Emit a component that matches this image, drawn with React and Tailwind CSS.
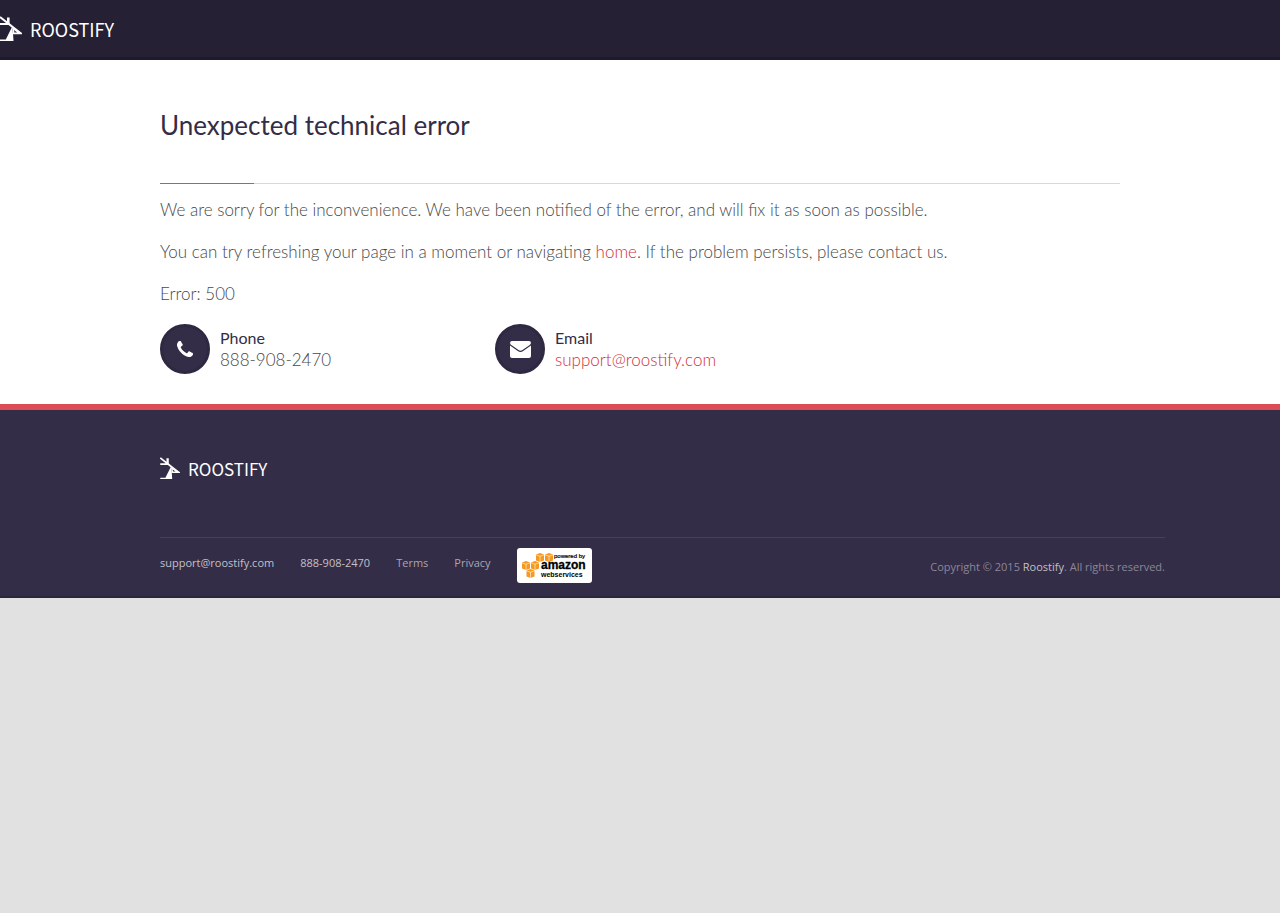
function RoostMark({ className }) {
  return (
    <svg viewBox="0 0 22 26" className={className} fill="none" aria-hidden="true">
      <path d="M0 1L20.500 17.200H13M0 8H9" stroke="#fff" strokeWidth="2" />
      <path d="M7 1.500h2.600v7.300L7 6.800z" fill="#fff" />
      <path d="M12 11l1 6.500.5 7.500H0v-1.500h5.800z" fill="#fff" />
      <path d="M12 11l10 7h-9z" fill="#fff" />
      <path d="M14 14l3.200 2.400h-2.800z" fill="#332d47" />
    </svg>
  );
}

function Cube({ x, y }) {
  return (
    <g transform={`translate(${x} ${y})`}>
      <path d="M0 1.500L4 0l4 1.500v6L4 9 0 7.500z" fill="#f7981f" />
      <path d="M0 1.800L4 3.200 8 1.800M4 3.200V9" stroke="#fff" strokeWidth=".6" fill="none" />
    </g>
  );
}

function AwsBadge() {
  return (
    <svg viewBox="0 0 75 35" className="block h-[35px] w-[75px]" role="img" aria-label="Powered by Amazon Web Services">
      <rect width="75" height="35" rx="3" fill="#fff" />
      <Cube x={19} y={5} />
      <Cube x={28} y={5} />
      <Cube x={5} y={13} />
      <Cube x={14} y={13} />
      <Cube x={9.5} y={21} />
      <g fill="#000" fontFamily="Liberation Sans, sans-serif">
        <text x="37" y="10" fontSize="6" stroke="#000" strokeWidth=".2">powered by</text>
        <text x="24" y="21" fontSize="12" fontWeight="700" stroke="#000" strokeWidth=".3">amazon</text>
        <text x="24" y="29" fontSize="7" fontWeight="700">webservices</text>
      </g>
    </svg>
  );
}

function Contact({ icon, label, children }) {
  return (
    <div className="flex w-[335px] items-center gap-2.5">
      <span className="flex size-[50px] items-center justify-center rounded-full border-3 border-[#2e2840] bg-[#332d47]">{icon}</span>
      <div className="text-[17px] leading-[22px]">
        <div className="text-[16px] text-[#332d47]">{label}</div>
        {children}
      </div>
    </div>
  );
}

export default function App() {
  return (
    <div className="min-h-screen bg-[#e1e1e1] font-['Lato',sans-serif]">
      <header className="flex h-[60px] items-center border-b-3 border-[#1f1a2b] bg-[#252033]">
        <a href="#" className="flex items-center gap-2 text-white">
          <RoostMark className="h-[26px] w-[22px]" />
          <span className="font-['Noto_Sans_CJK_SC',sans-serif] text-[18px] leading-none">ROOSTIFY</span>
        </a>
      </header>

      <main className="bg-white pt-[45px] pb-[30px]">
        <div className="mx-auto max-w-[960px] text-[17px] leading-[22px] text-[#484848]">
          <h1 className="text-[26px] leading-[40px] text-[#332d47]">Unexpected technical error</h1>
          <div className="mt-[38px] h-px bg-[#d9d9d9]">
            <div className="h-px w-[94px] bg-[#dc4c56]" />
          </div>
          <div className="mt-[15px] flex flex-col gap-5 font-light">
            <p>We are sorry for the inconvenience. We have been notified of the error, and will fix it as soon as possible.</p>
            <p>
              You can try refreshing your page in a moment or navigating{" "}
              <a href="#" className="text-[#d22f3b]">home</a>. If the problem persists, please contact us.
            </p>
            <p>Error: 500</p>
          </div>
          <div className="mt-[19px] flex">
            <Contact
              label="Phone"
              icon={
                <svg viewBox="0 0 1408 1408" className="size-4" fill="#fff" aria-hidden="true">
                  <path d="M1408 1112q0 27-10 70.500t-21 68.500q-21 50-122 106-94 51-186 51-27 0-53-3.500t-57.500-12.500-47-14.500-55.500-20.500-49-18q-98-35-175-83-127-79-264-216t-216-264q-48-77-83-175-3-9-18-49t-20.500-55.500-14.500-47-12.500-57.500-3.500-53q0-92 51-186 56-101 106-122 25-11 68.500-21t70.500-10q14 0 21 3 18 6 53 76 11 19 30 54t35 63.500 31 53.500q3 4 17.500 25t21.500 35.500 7 28.500q0 20-28.500 50t-62 55-62 53-28.500 46q0 9 5 22.500t8.500 20.500 14 24 11.500 19q76 137 174 235t235 174q2 1 19 11.500t24 14 20.500 8.500 22.500 5q18 0 46-28.500t53-62 55-62 50-28.500q14 0 28.500 7t35.500 21.500 25 17.500q25 15 53.500 31t63.500 35 54 30q70 35 76 53 3 7 3 21z" />
                </svg>
              }
            >
              <div className="font-light">888-908-2470</div>
            </Contact>
            <Contact
              label="Email"
              icon={
                <svg viewBox="0 0 21 17" className="h-[17px] w-[21px]" fill="#fff" aria-hidden="true">
                  <path d="M2 0h17q2 0 2 2-.5 1.500-2 2.600l-6.500 4.500Q10.500 10.500 8.500 9.100L2 4.600Q.2 3.500 0 2 0 0 2 0zM0 4.500l7.800 5.600q2.700 2 5.400 0L21 4.500V15q0 2-2 2H2q-2 0-2-2z" />
                </svg>
              }
            >
              <a href="mailto:support@roostify.com" className="block font-light text-[#d22f3b]">support@roostify.com</a>
            </Contact>
          </div>
        </div>
      </main>

      <footer className="border-t-6 border-b-2 border-t-[#dc4c56] border-b-[#2b263b] bg-[#332d47] pt-[47px] pb-[13px] text-[#aaa6b2]">
        <div className="mx-auto max-w-[960px]">
          <a href="#" className="flex items-center gap-2 text-white">
            <RoostMark className="h-[23px] w-5" />
            <span className="font-['Noto_Sans_CJK_SC',sans-serif] text-[17px] leading-none">ROOSTIFY</span>
          </a>
          <div className="mt-[57px] -mr-[45px] flex items-start justify-between border-t border-[#464059] pt-2.5 font-['Open_Sans',sans-serif] text-[11px] leading-[16px]">
            <div className="flex gap-[26px]">
              <a href="mailto:support@roostify.com" className="mt-[7px] text-[#c3c0c8]">support@roostify.com</a>
              <a href="tel:8889082470" className="mt-[7px] text-[#c3c0c8]">888-908-2470</a>
              <a href="#" className="mt-[7px]">Terms</a>
              <a href="#" className="mt-[7px]">Privacy</a>
              <AwsBadge />
            </div>
            <p className="mt-[11px] text-[#8c8798]">
              Copyright © 2015 <a href="#" className="text-[#c3c0c8]">Roostify</a>. All rights reserved.
            </p>
          </div>
        </div>
      </footer>
    </div>
  );
}
